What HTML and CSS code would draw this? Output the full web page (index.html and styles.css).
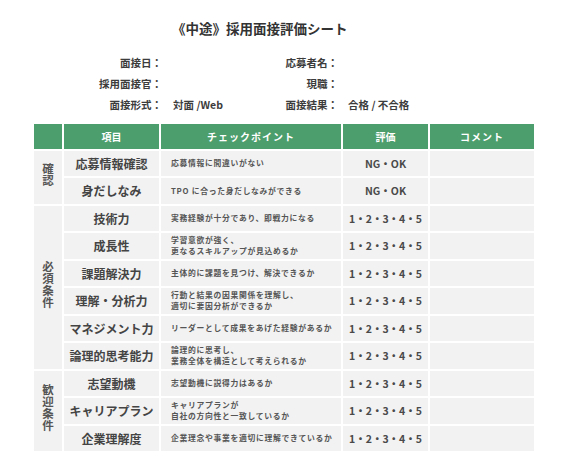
FILE: index.html
```html
<!DOCTYPE html>
<html lang="ja">
<head>
<meta charset="utf-8">
<title>《中途》採用面接評価シート</title>
<link rel="stylesheet" href="styles.css">
</head>
<body>
<div class="page">
  <h1 class="title">《中途》採用面接評価シート</h1>
  <div class="info">
    <div class="label">面接日：</div><div class="value"></div>
    <div class="label">応募者名：</div><div class="value v2"></div>
    <div class="label">採用面接官：</div><div class="value"></div>
    <div class="label">現職：</div><div class="value v2"></div>
    <div class="label">面接形式：</div><div class="value">対面 /Web</div>
    <div class="label">面接結果：</div><div class="value v2">合格 / 不合格</div>
  </div>
  <table class="sheet">
    <colgroup>
      <col class="c-cat"><col class="c-item"><col class="c-point"><col class="c-eval"><col class="c-comment">
    </colgroup>
    <thead>
      <tr class="head">
        <th></th><th>項目</th><th class="wide">チェックポイント</th><th>評価</th><th class="wide">コメント</th>
      </tr>
    </thead>
    <tbody>
      <tr>
        <td class="cat" rowspan="2"><span class="vert">確認</span></td>
        <td class="item">応募情報確認</td><td class="point">応募情報に間違いがない</td><td class="eval">NG・OK</td><td></td>
      </tr>
      <tr>
        <td class="item">身だしなみ</td><td class="point">TPO に合った身だしなみができる</td><td class="eval">NG・OK</td><td></td>
      </tr>
      <tr>
        <td class="cat" rowspan="6"><span class="vert">必須条件</span></td>
        <td class="item">技術力</td><td class="point">実務経験が十分であり、即戦力になる</td><td class="eval">1・2・3・4・5</td><td></td>
      </tr>
      <tr>
        <td class="item">成長性</td><td class="point">学習意欲が強く、<br>更なるスキルアップが見込めるか</td><td class="eval">1・2・3・4・5</td><td></td>
      </tr>
      <tr>
        <td class="item">課題解決力</td><td class="point">主体的に課題を見つけ、解決できるか</td><td class="eval">1・2・3・4・5</td><td></td>
      </tr>
      <tr>
        <td class="item">理解・分析力</td><td class="point">行動と結果の因果関係を理解し、<br>適切に要因分析ができるか</td><td class="eval">1・2・3・4・5</td><td></td>
      </tr>
      <tr>
        <td class="item">マネジメント力</td><td class="point">リーダーとして成果をあげた経験があるか</td><td class="eval">1・2・3・4・5</td><td></td>
      </tr>
      <tr>
        <td class="item">論理的思考能力</td><td class="point">論理的に思考し、<br>業務全体を構造として考えられるか</td><td class="eval">1・2・3・4・5</td><td></td>
      </tr>
      <tr>
        <td class="cat" rowspan="3"><span class="vert">歓迎条件</span></td>
        <td class="item">志望動機</td><td class="point">志望動機に説得力はあるか</td><td class="eval">1・2・3・4・5</td><td></td>
      </tr>
      <tr>
        <td class="item">キャリアプラン</td><td class="point">キャリアプランが<br>自社の方向性と一致しているか</td><td class="eval">1・2・3・4・5</td><td></td>
      </tr>
      <tr>
        <td class="item">企業理解度</td><td class="point">企業理念や事業を適切に理解できているか</td><td class="eval">1・2・3・4・5</td><td></td>
      </tr>
    </tbody>
  </table>
</div>
</body>
</html>
```
FILE: styles.css
```css
html, body {
  margin: 0;
  padding: 0;
  background: #ffffff;
}
body {
  font-family: "Noto Sans CJK JP", "Noto Sans", sans-serif;
  color: #3a3a3a;
}
.page {
  width: 567px;
  padding-top: 18px;
}
.title {
  margin: 0 0 0 172px;
  font-size: 13.5px;
  line-height: 20px;
  font-weight: 700;
  text-align: left;
  color: #333333;
}
.info {
  display: grid;
  grid-template-columns: 162px 88px 88px auto;
  grid-auto-rows: 21px;
  margin-top: 13.5px;
  font-size: 10.5px;
  font-weight: 700;
  line-height: 21px;
  color: #3c3c3c;
}
.label {
  text-align: right;
}
.value {
  padding-left: 11px;
}
.value.v2 {
  padding-left: 10px;
}
.sheet {
  margin-top: 7px;
  margin-left: 32px;
  width: 504px;
  table-layout: fixed;
  border-collapse: collapse;
}
.sheet th, .sheet td {
  border: 2px solid #ffffff;
  padding: 0;
  background: #f2f2f2;
  vertical-align: middle;
}
.c-cat { width: 30px; }
.c-item { width: 97px; }
.c-point { width: 182px; }
.c-eval { width: 87px; }
.c-comment { width: 106px; }
.head {
  height: 27px;
}
.sheet th {
  background: #4c9e6c;
  color: #ffffff;
  font-size: 10px;
  font-weight: 700;
  text-align: center;
}
.sheet th.wide {
  letter-spacing: 1px;
}
.sheet tbody tr {
  height: 27.5px;
}
.cat {
  text-align: center;
}
.vert {
  display: inline-block;
  writing-mode: vertical-rl;
  text-orientation: upright;
  font-size: 11.5px;
  letter-spacing: 0.5px;
  font-weight: 700;
  line-height: 14px;
  color: #555555;
  white-space: nowrap;
}
.item {
  text-align: center;
  font-size: 12px;
  font-weight: 700;
  color: #444444;
}
.point {
  padding-left: 10px !important;
  font-size: 7.8px;
  line-height: 10.5px;
  letter-spacing: 0.7px;
  font-weight: 700;
  color: #555555;
}
.eval {
  text-align: center;
  font-size: 10.5px;
  font-weight: 700;
  color: #4a4a4a;
}
```
